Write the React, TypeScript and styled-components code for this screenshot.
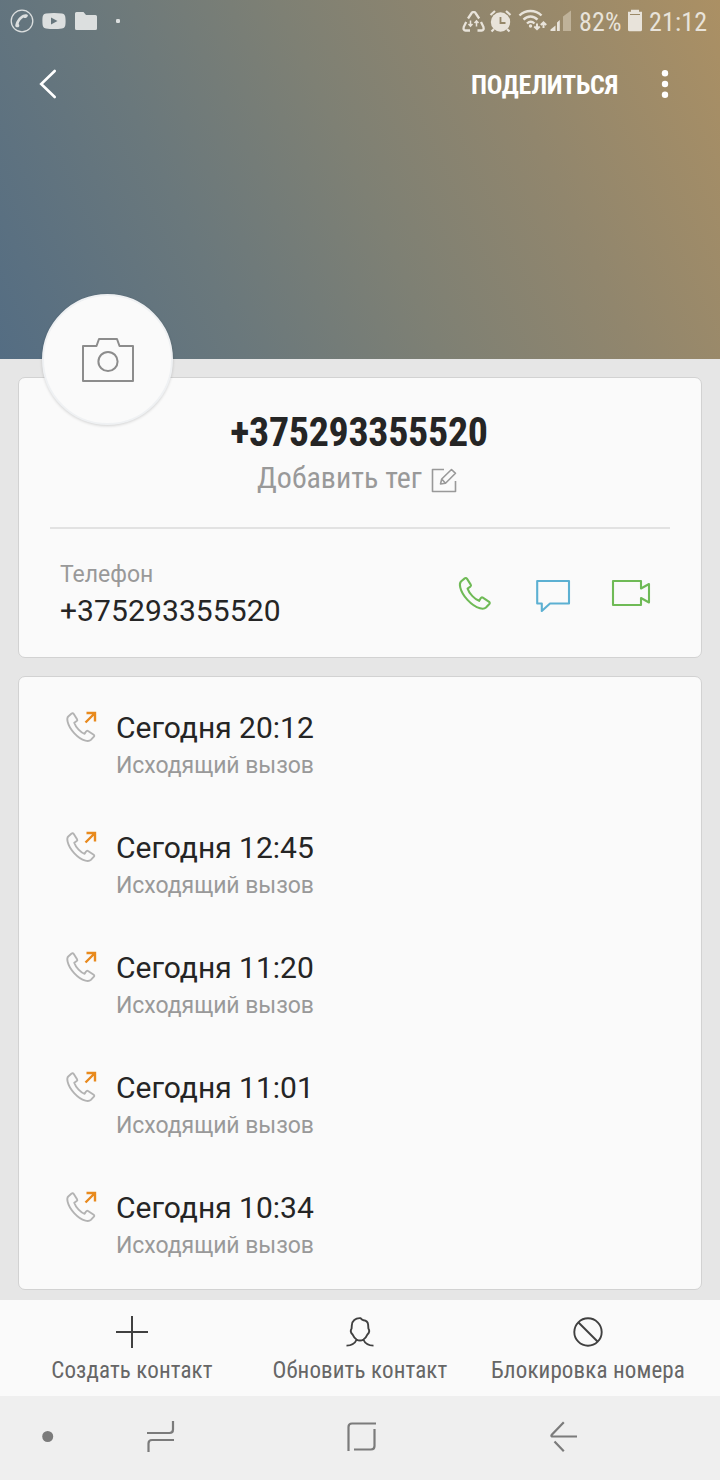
import React from 'react';
import styled, { createGlobalStyle } from 'styled-components';

const GlobalStyle = createGlobalStyle`
  * { box-sizing: border-box; }
  body { margin: 0; background: #e6e6e6; font-family: Roboto, sans-serif; }
  svg { display: block; flex: none; overflow: visible; }
`;

const condensed = `
  font-family: "Roboto Condensed", Roboto, sans-serif;
  font-stretch: 75%;
`;

const Screen = styled.div`
  width: 720px;
  height: 1480px;
  display: flex;
  flex-direction: column;
  background: #e6e6e6;
  overflow: hidden;
`;

const Header = styled.header`
  height: 359px;
  flex: none;
  background: linear-gradient(65deg, #546d83 0%, #6a787c 28%, #7e8074 50%, #91866d 72%, #ab9064 100%);
`;

const StatusBar = styled.div`
  height: 44px;
  padding: 0 13px 0 10px;
  display: flex;
  justify-content: space-between;
`;

const StatusIcons = styled.div`
  display: flex;
`;

const StatusText = styled.span<{ $width: number }>`
  ${condensed}
  width: ${(p) => p.$width}px;
  font-size: 26px;
  line-height: 44px;
  letter-spacing: 0.2px;
  white-space: nowrap;
  color: #e8e3da;
`;

const Toolbar = styled.div`
  height: 80px;
  padding: 0 50px 0 38px;
  display: flex;
  align-items: center;
`;

const ShareLabel = styled.button`
  ${condensed}
  border: 0;
  padding: 2px 0 0;
  background: none;
  margin-left: auto;
  margin-right: 42px;
  font-size: 26px;
  font-weight: 700;
  line-height: 32px;
  letter-spacing: -0.25px;
  color: #fff;
`;

const Card = styled.section<{ $height: number; $top: number }>`
  height: ${(p) => p.$height}px;
  margin: ${(p) => p.$top}px 18px 0;
  flex: none;
  background: #fafafa;
  border: 1px solid #d2d2d2;
  border-radius: 7px;
  position: relative;
`;

const Avatar = styled.div`
  position: absolute;
  left: 23px;
  top: -84px;
  width: 131px;
  height: 131px;
  border-radius: 50%;
  background: #fafafa;
  border: 2px solid #eff1f3;
  box-shadow: 0 1px 3px rgba(0, 0, 0, 0.16);
  display: flex;
  align-items: center;
  justify-content: center;
`;

const Title = styled.h1`
  ${condensed}
  margin: 31px 0 0;
  padding-right: 2px;
  font-size: 40px;
  font-weight: 700;
  line-height: 48px;
  letter-spacing: -0.33px;
  text-align: center;
  color: #252525;
`;

const TagRow = styled.div`
  height: 44px;
  padding-right: 6px;
  display: flex;
  justify-content: center;
  align-items: center;
  gap: 9px;
`;

const TagLabel = styled.span`
  ${condensed}
  font-size: 30px;
  line-height: 44px;
  margin-top: -2px;
  color: #999;
`;

const EditIcon = styled.svg`
  margin-top: 2px;
`;

const Divider = styled.div`
  height: 2px;
  margin: 26px 31px 0;
  background: #e2e2e2;
`;

const PhoneRow = styled.div`
  display: flex;
  justify-content: space-between;
  padding: 30px 49px 0 41px;
`;

const PhoneActions = styled.div`
  display: flex;
  padding-top: 17px;
`;

const Caption = styled.div`
  font-size: 23px;
  line-height: 32px;
  color: #999;
`;

const CallCaption = styled(Caption)`
  margin-top: 2px;
  letter-spacing: -0.05px;
`;

const Value = styled.div`
  font-size: 30px;
  line-height: 40px;
  color: #252525;
`;

const PhoneValue = styled(Value)`
  letter-spacing: 0.1px;
`;

const CallItem = styled.div`
  display: flex;
  height: 120px;
  padding: 31px 0 0 45px;
  gap: 17px;
`;

const CallIcon = styled.svg`
  margin-top: -1px;
`;

const BottomBar = styled.footer`
  height: 96px;
  margin-top: 10px;
  flex: none;
  background: #fafafa;
  display: grid;
  grid-template-columns: 228px 228px 228px;
  justify-content: center;
`;

const BottomAction = styled.div`
  display: flex;
  flex-direction: column;
  align-items: center;
  padding-top: 16px;
`;

const BottomLabel = styled.span`
  ${condensed}
  margin-top: 7px;
  font-size: 23px;
  line-height: 32px;
  letter-spacing: 0.12px;
  white-space: nowrap;
  color: #666;
`;

const NavBar = styled.nav`
  flex: 1;
  background: #efefef;
  display: flex;
  padding-top: 24px;
`;

const handset =
  'M6 1.2 L2.2 4.4 C0.8 5.8 1 8.4 1.5 10.4 C3.4 18.5 12.5 29 21.5 31.6 C24 32.3 26 32.3 27.6 30.8 L31 27.2 C31.7 26.4 31.5 25.6 30.8 25.1 L24.4 20.8 C23.5 20.2 22.8 20.5 22.2 21.4 L20.6 24 C16.5 22.6 10.6 16.8 8.9 11.6 L11.7 9.6 C12.5 9 12.6 8.3 12.1 7.5 L8.4 1.7 C7.8 0.8 6.9 0.5 6 1.2 Z';

const calls = ['20:12', '12:45', '11:20', '11:01', '10:34'];

export default function App() {
  return (
    <Screen>
      <GlobalStyle />
      <Header>
        <StatusBar>
          <StatusIcons>
            <svg width="120" height="44" viewBox="10 0 120 44" fill="#dcdfdf">
              <circle cx="22" cy="21" r="10.8" fill="none" stroke="#dcdfdf" strokeWidth="1.3" />
              <path d="M15.5 24.3c-.6 1.200-.2 2.400.9 2.900 1 .4 2.200.1 2.700-.8.400-.8.200-1.600-.5-2.300.6-2.600 2.600-5.200 5-6.500.8.600 1.900.7 2.600.200 1-.7 1.900-1.900 1.700-2.600-.5-1.200-3-1.400-4.900-.5-3.500 1.700-6.700 6.100-7.500 9.600z" />
              <path fillRule="evenodd" d="M46 13.500c5-.7 11-.7 16 0 2.500.5 3.600 1.500 3.600 7.500s-1 7-3.600 7.500c-5 .7-11 .7-16 0-2.500-.5-3.600-1.500-3.600-7.500s1-7 3.600-7.500zM51 17.600v6.800l6.500-3.400z" />
              <path d="M76.500 12h7l2.500 3h9.500a1.500 1.500 0 0 1 1.500 1.500v12a1.500 1.500 0 0 1-1.500 1.500H76.500a1.500 1.500 0 0 1-1.500-1.500v-15a1.500 1.500 0 0 1 1.500-1.500z" />
              <rect x="116" y="19" width="4" height="4" rx="1.200" />
            </svg>
          </StatusIcons>
          <StatusIcons>
            <svg width="119" height="44" viewBox="460 0 119 44" fill="none" stroke="#e8e3da">
              <g strokeWidth="2.300">
                <path d="M468 18.500l3.700-5.500q.5-.8 1.200-.8h1.400q.7 0 1.200.8l3.700 5.500M481 22l2.400 4.800q.9 3.700-1.700 3.700h-4.200M470 30.500h-4.500q-2.600 0-1.700-3.700l2.400-4.800" />
                <path strokeWidth="1.500" d="M470.500 20.500v5.500m-2-2l2 2.200 2-2.200M476.500 26.500v-5.500m-2 2l2-2.200 2 2.200" />
              </g>
              <circle cx="500.500" cy="22" r="9.700" fill="#e8e3da" stroke="none" />
              <path strokeWidth="2.200" d="M490.500 15l4.500-4M510.500 15l-4.500-4M494 29l-2.500 2.500M507 29l2.500 2.500" />
              <path stroke="#958769" strokeWidth="1.800" d="M500.500 17v6h5" />
              <g strokeWidth="2.400">
                <path d="M519.500 15.500c6-6 16-6 22 0M523.500 19.700c4-4.200 10-4.200 14 0M527 23.500c2.500-2.400 5-2.400 7.500 0" />
                <circle cx="530.500" cy="26" r="1.700" fill="#e8e3da" stroke="none" />
                <path strokeWidth="2" d="M537 23.500v5.500m-2.700-2.500l2.700 2.700 2.700-2.700M543.500 28v-5.500m-2.700 2.500l2.700-2.700 2.700 2.700" />
              </g>
              <path stroke="none" fill="#e8e3da" d="M550.500 31v-1.500l5-4V31zM557 31v-8.500l2.800-2.500v11z" />
              <path stroke="none" fill="#bfb299" d="M563 31V16.500l8-6V31z" />
            </svg>
            <StatusText $width={48}>82%</StatusText>
            <svg width="22" height="44" viewBox="627 0 22 44">
              <path fill="#e8e3da" d="M631 9.800h8v2h3v18a1.500 1.500 0 0 1-1.500 1.500h-11a1.500 1.500 0 0 1-1.500-1.500v-18h3z" />
              <path stroke="#9c8a68" strokeWidth="1" d="M630 14.500h10" />
            </svg>
            <StatusText $width={58}>21:12</StatusText>
          </StatusIcons>
        </StatusBar>
        <Toolbar>
          <svg width="20" height="30" viewBox="0 0 20 30" fill="none" stroke="#fff" strokeWidth="2.600">
            <path d="M16.700 2L3.200 15 16.700 28" strokeLinecap="round" />
          </svg>
          <ShareLabel>ПОДЕЛИТЬСЯ</ShareLabel>
          <svg width="10" height="30" viewBox="0 0 10 30" fill="#fff">
            <circle cx="5" cy="4.200" r="3.200" />
            <circle cx="5" cy="15" r="3.200" />
            <circle cx="5" cy="25.800" r="3.200" />
          </svg>
        </Toolbar>
      </Header>

      <Card $top={18} $height={281}>
        <Avatar>
          <svg width="53" height="45" viewBox="0 0 53 45" fill="none" stroke="#8c8c8c" strokeWidth="2">
            <path d="M2 9h13.500l2.500-7h18l2.500 7H52v35H2z" strokeLinejoin="round" />
            <circle cx="27" cy="24.500" r="9.600" />
          </svg>
        </Avatar>
        <Title>+375293355520</Title>
        <TagRow>
          <TagLabel>Добавить тег</TagLabel>
          <EditIcon width="26" height="26" viewBox="0 0 26 26" fill="none" stroke="#999" strokeWidth="1.600" strokeLinejoin="round">
            <path d="M13 2.500H1.500v22H24.500V14" />
            <path d="M9.500 17l1.200-5L20.500 2.500l4 3.800-10 10zM10.700 12l3.800 4.200" />
          </EditIcon>
        </TagRow>
        <Divider />
        <PhoneRow>
          <div>
            <Caption>Телефон</Caption>
            <PhoneValue>+375293355520</PhoneValue>
          </div>
          <PhoneActions>
            <svg width="194" height="40" viewBox="458 576 194 40" fill="none" strokeWidth="2.100" strokeLinejoin="round">
              <path d={handset} transform="translate(458.800 577.200) scale(.985)" stroke="#6fba56" />
              <path d="M537.200 581h31.800v22.500h-19l-8.200 7.500v-7.500h-4.600z" stroke="#5cb0d2" />
              <path d="M613 581h28v7.500l8-4.500v18.500l-8-4.500v7h-28z" stroke="#6fba56" />
            </svg>
          </PhoneActions>
        </PhoneRow>
      </Card>

      <Card $top={18} $height={614}>
        {calls.map((time) => (
          <CallItem key={time}>
            <CallIcon width="35" height="36" viewBox="0 0 35 36" fill="none" strokeLinejoin="round">
              <path d={handset} transform="translate(2.300 5.500) scale(.89)" stroke="#b3b3b3" strokeWidth="2.100" />
              <path d="M21.500 15.500L31 6M22.500 6H31v8.500" stroke="#e88a1e" strokeWidth="2.400" strokeLinejoin="miter" />
            </CallIcon>
            <div>
              <Value>Сегодня {time}</Value>
              <CallCaption>Исходящий вызов</CallCaption>
            </div>
          </CallItem>
        ))}
      </Card>

      <BottomBar>
        <BottomAction>
          <svg width="32" height="32" viewBox="0 0 32 32" stroke="#404040" strokeWidth="2">
            <path d="M16 0v32M0 16h32" />
          </svg>
          <BottomLabel>Создать контакт</BottomLabel>
        </BottomAction>
        <BottomAction>
          <svg width="32" height="32" viewBox="0 0 32 32" fill="none" stroke="#404040" strokeWidth="1.900" strokeLinejoin="round">
            <path d="M16.500 2.200c-5-.4-8.700 2.600-8.700 7.300l-.2 3c-1.300 2-.8 4.500 1.200 6.300 1 2.200 2.200 3.700 3.700 4.700 2 1.200 5 1.200 7 0 1.500-1 2.700-2.500 3.700-4.700 2-1.800 2.500-4.300 1.200-6.300l-.3-4c-.3-2.500-2-4-4.600-4.300-1.200 0-2-.8-3-2zM12.700 23.500c-1.500 3.500-4 6-10.200 6.100M19.300 23.500c1.500 3.500 4 6 10.200 6.100" />
          </svg>
          <BottomLabel>Обновить контакт</BottomLabel>
        </BottomAction>
        <BottomAction>
          <svg width="32" height="32" viewBox="0 0 32 32" fill="none" stroke="#404040" strokeWidth="1.900">
            <circle cx="16" cy="16" r="13.700" />
            <path d="M6.500 6.500l19 19" />
          </svg>
          <BottomLabel>Блокировка номера</BottomLabel>
        </BottomAction>
      </BottomBar>
      <NavBar>
        <svg width="720" height="34" viewBox="0 1420 720 34" fill="none" stroke="#7b7b7b" strokeWidth="2.200">
          <circle cx="47.700" cy="1436.500" r="5.500" fill="#7b7b7b" stroke="none" />
          <path d="M147 1433h22.500q3.500 0 3.500-3.500v-8.500M174 1440h-22q-3.500 0-3.500 3.500v8.500" />
          <path d="M376 1423.500h-24q-3.500 0-3.500 3.500v24M374.500 1429v17q0 3.500-3.500 3.500h-17" />
          <path d="M577 1436.500h-24q-2.500 0-1.200-1.800l12-12.500M554.500 1441.500l9.300 9.800" />
        </svg>
      </NavBar>
    </Screen>
  );
}
